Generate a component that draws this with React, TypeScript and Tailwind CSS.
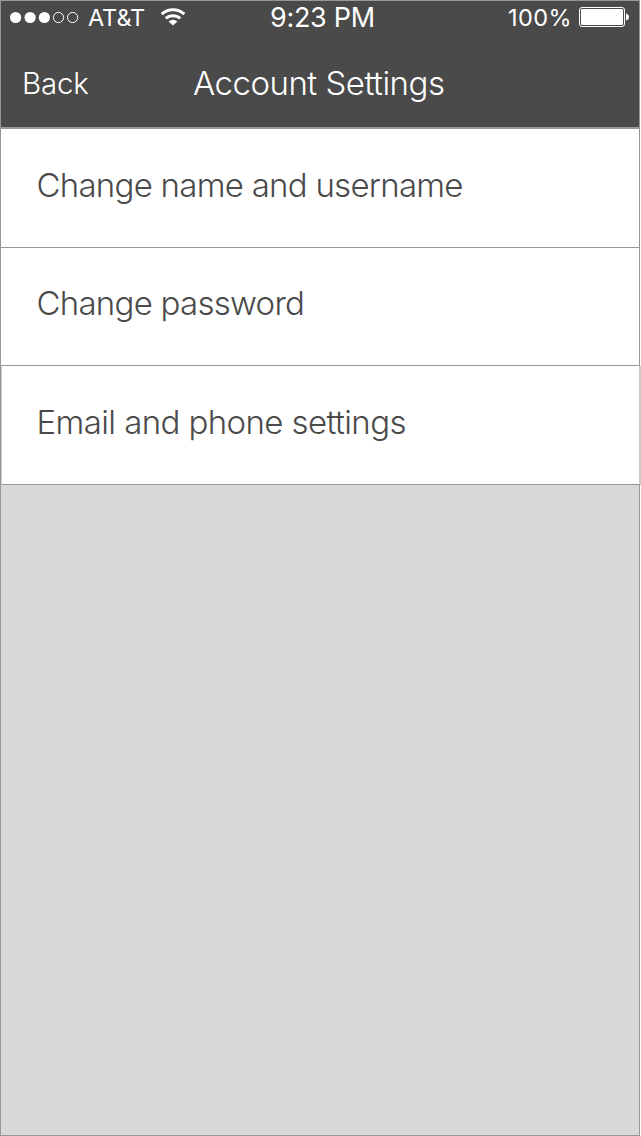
import React from "react";

const rows = [
  { label: "Change name and username", box: "h-[119px] border-b border-[#979797]", text: "-ml-[0.5px] tracking-[-0.74px]" },
  { label: "Change password", box: "h-[118px] border-b border-[#979797]", text: "-ml-[0.5px] tracking-[-0.74px]" },
  { label: "Email and phone settings", box: "h-[119px] w-[640px] border-b border-b-[#979797] border-l border-l-[#cbcbcb] border-r-2 border-r-[#cbcbcb]", text: "-ml-[1.5px] tracking-[-0.6px]" },
];

function Signal() {
  return (
    <svg width="70" height="14" viewBox="0 0 70 14" className="shrink-0">
      {[6.6, 21.1, 35.4].map((x) => (
        <circle key={x} cx={x} cy="7.5" r="5.6" fill="#fff" />
      ))}
      {[49.5, 63.6].map((x) => (
        <circle key={x} cx={x} cy="7.5" r="5.1" fill="none" stroke="#fff" strokeWidth="1" />
      ))}
    </svg>
  );
}

function Wifi() {
  return (
    <svg width="26" height="18" viewBox="0 0 26 18" className="shrink-0">
      <g fill="none" stroke="#fff" strokeWidth="3">
        <path d="M1.7 6.2A16.5 16.5 0 0 1 24.3 6.2" />
        <path d="M5.8 10.5A10.5 10.5 0 0 1 20.2 10.5" />
      </g>
      <path d="M8.6 13.6A6.2 6.2 0 0 1 17.4 13.6L13 17.6Z" fill="#fff" />
    </svg>
  );
}

function Battery() {
  return (
    <svg width="52" height="20" viewBox="0 0 52 20" className="shrink-0">
      <rect x="0.5" y="0.5" width="45" height="19" rx="2.5" fill="none" stroke="#fff" />
      <rect x="2" y="2" width="42" height="16" rx="1.2" fill="#fff" />
      <path d="M47 6.5Q50 7.5 50 10T47 13.5Z" fill="#fff" />
    </svg>
  );
}

export default function App() {
  return (
    <div className="h-[1136px] w-[641px] overflow-hidden bg-white font-['Inter',sans-serif] font-light">
      <div className="flex h-[1136px] w-[640px] flex-col border border-[#979797] bg-[#d8d8d8]">
        <header className="h-[128px] shrink-0 border-b-2 border-[#979797] bg-[#4a4a4a] text-white">
          <div className="grid h-8 grid-cols-[269px_1fr_132px] items-center whitespace-nowrap">
            <div className="flex h-8 items-center pl-[8px]">
              <span className="pb-px"><Signal /></span>
              <span className="ml-[9px] w-[62px] pt-px text-[23.5px] leading-8 font-normal tracking-[-0.1px]">AT&amp;T</span>
              <span className="ml-[10px] pb-px"><Wifi /></span>
            </div>
            <div className="h-8 pt-px text-[27px] leading-8 font-normal tracking-[-0.3px]">9:23 PM</div>
            <div className="flex h-8 items-center">
              <span className="ml-px w-[71px] pt-px text-[23.5px] leading-8 font-normal tracking-[0.4px]">100%</span>
              <span><Battery /></span>
            </div>
          </div>
          <div className="flex h-[94px] items-center pt-[6px] pl-[21px] whitespace-nowrap">
            <span className="w-[171px] text-[29.5px] leading-10 tracking-[-0.2px]">Back</span>
            <h1 className="text-[33px] leading-10 tracking-[-0.5px]">Account Settings</h1>
          </div>
        </header>
        <ul className="bg-white">
          {rows.map((row) => (
            <li key={row.label} className={`flex items-center pb-[5px] pl-9 text-[33px] whitespace-nowrap text-[#4a4a4a] ${row.box}`}>
              <span className={row.text}>{row.label}</span>
            </li>
          ))}
        </ul>
      </div>
    </div>
  );
}
